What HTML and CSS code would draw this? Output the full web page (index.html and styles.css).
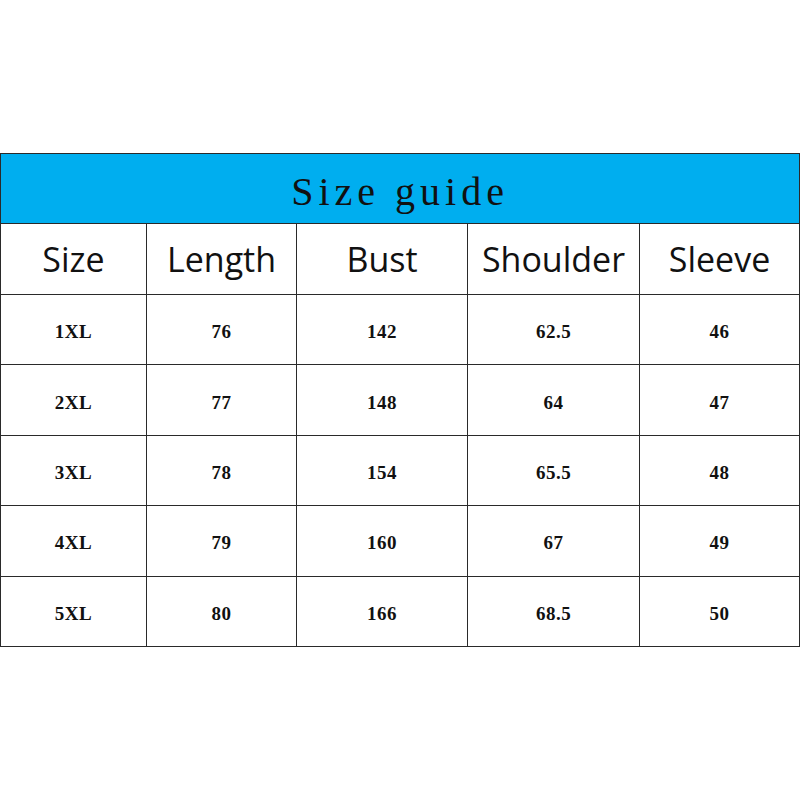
FILE: index.html
```html
<!DOCTYPE html>
<html>
<head>
<meta charset="utf-8">
<link rel="stylesheet" href="styles.css">
</head>
<body>
<div class="page">
<table class="guide">
  <colgroup>
    <col class="c1"><col class="c2"><col class="c3"><col class="c4"><col class="c5">
  </colgroup>
  <tr class="title-row"><th colspan="5" class="title">Size guide</th></tr>
  <tr class="head-row">
    <th>Size</th><th>Length</th><th>Bust</th><th>Shoulder</th><th>Sleeve</th>
  </tr>
  <tr><td>1XL</td><td>76</td><td>142</td><td>62.5</td><td>46</td></tr>
  <tr><td>2XL</td><td>77</td><td>148</td><td>64</td><td>47</td></tr>
  <tr><td>3XL</td><td>78</td><td>154</td><td>65.5</td><td>48</td></tr>
  <tr><td>4XL</td><td>79</td><td>160</td><td>67</td><td>49</td></tr>
  <tr><td>5XL</td><td>80</td><td>166</td><td>68.5</td><td>50</td></tr>
</table>
</div>
</body>
</html>
```

FILE: styles.css
```css
html, body {
  margin: 0;
  padding: 0;
  background: #ffffff;
}
.page {
  padding-top: 153px;
}
.guide {
  border-collapse: collapse;
  width: 799px;
  table-layout: fixed;
}
.c1 { width: 146px; }
.c2 { width: 150px; }
.c3 { width: 171px; }
.c4 { width: 172px; }
.c5 { width: 160px; }
.guide th, .guide td {
  border: 1px solid #2a2a2a;
  text-align: center;
  padding: 0;
}
.title-row th {
  height: 70px;
  box-sizing: border-box;
  padding-top: 5px;
  background: #00aeef;
  font-family: "Liberation Serif", serif;
  font-weight: normal;
  font-size: 40px;
  letter-spacing: 5px;
  color: #111;
}
.head-row th {
  height: 70px;
  font-family: "Open Sans", sans-serif;
  font-weight: normal;
  font-size: 34px;
  color: #111;
}
.guide td {
  height: 70.4px;
  box-sizing: border-box;
  padding-top: 5px;
  font-family: "Liberation Serif", serif;
  font-weight: bold;
  font-size: 19px;
  letter-spacing: 0.5px;
  color: #111;
}
```
